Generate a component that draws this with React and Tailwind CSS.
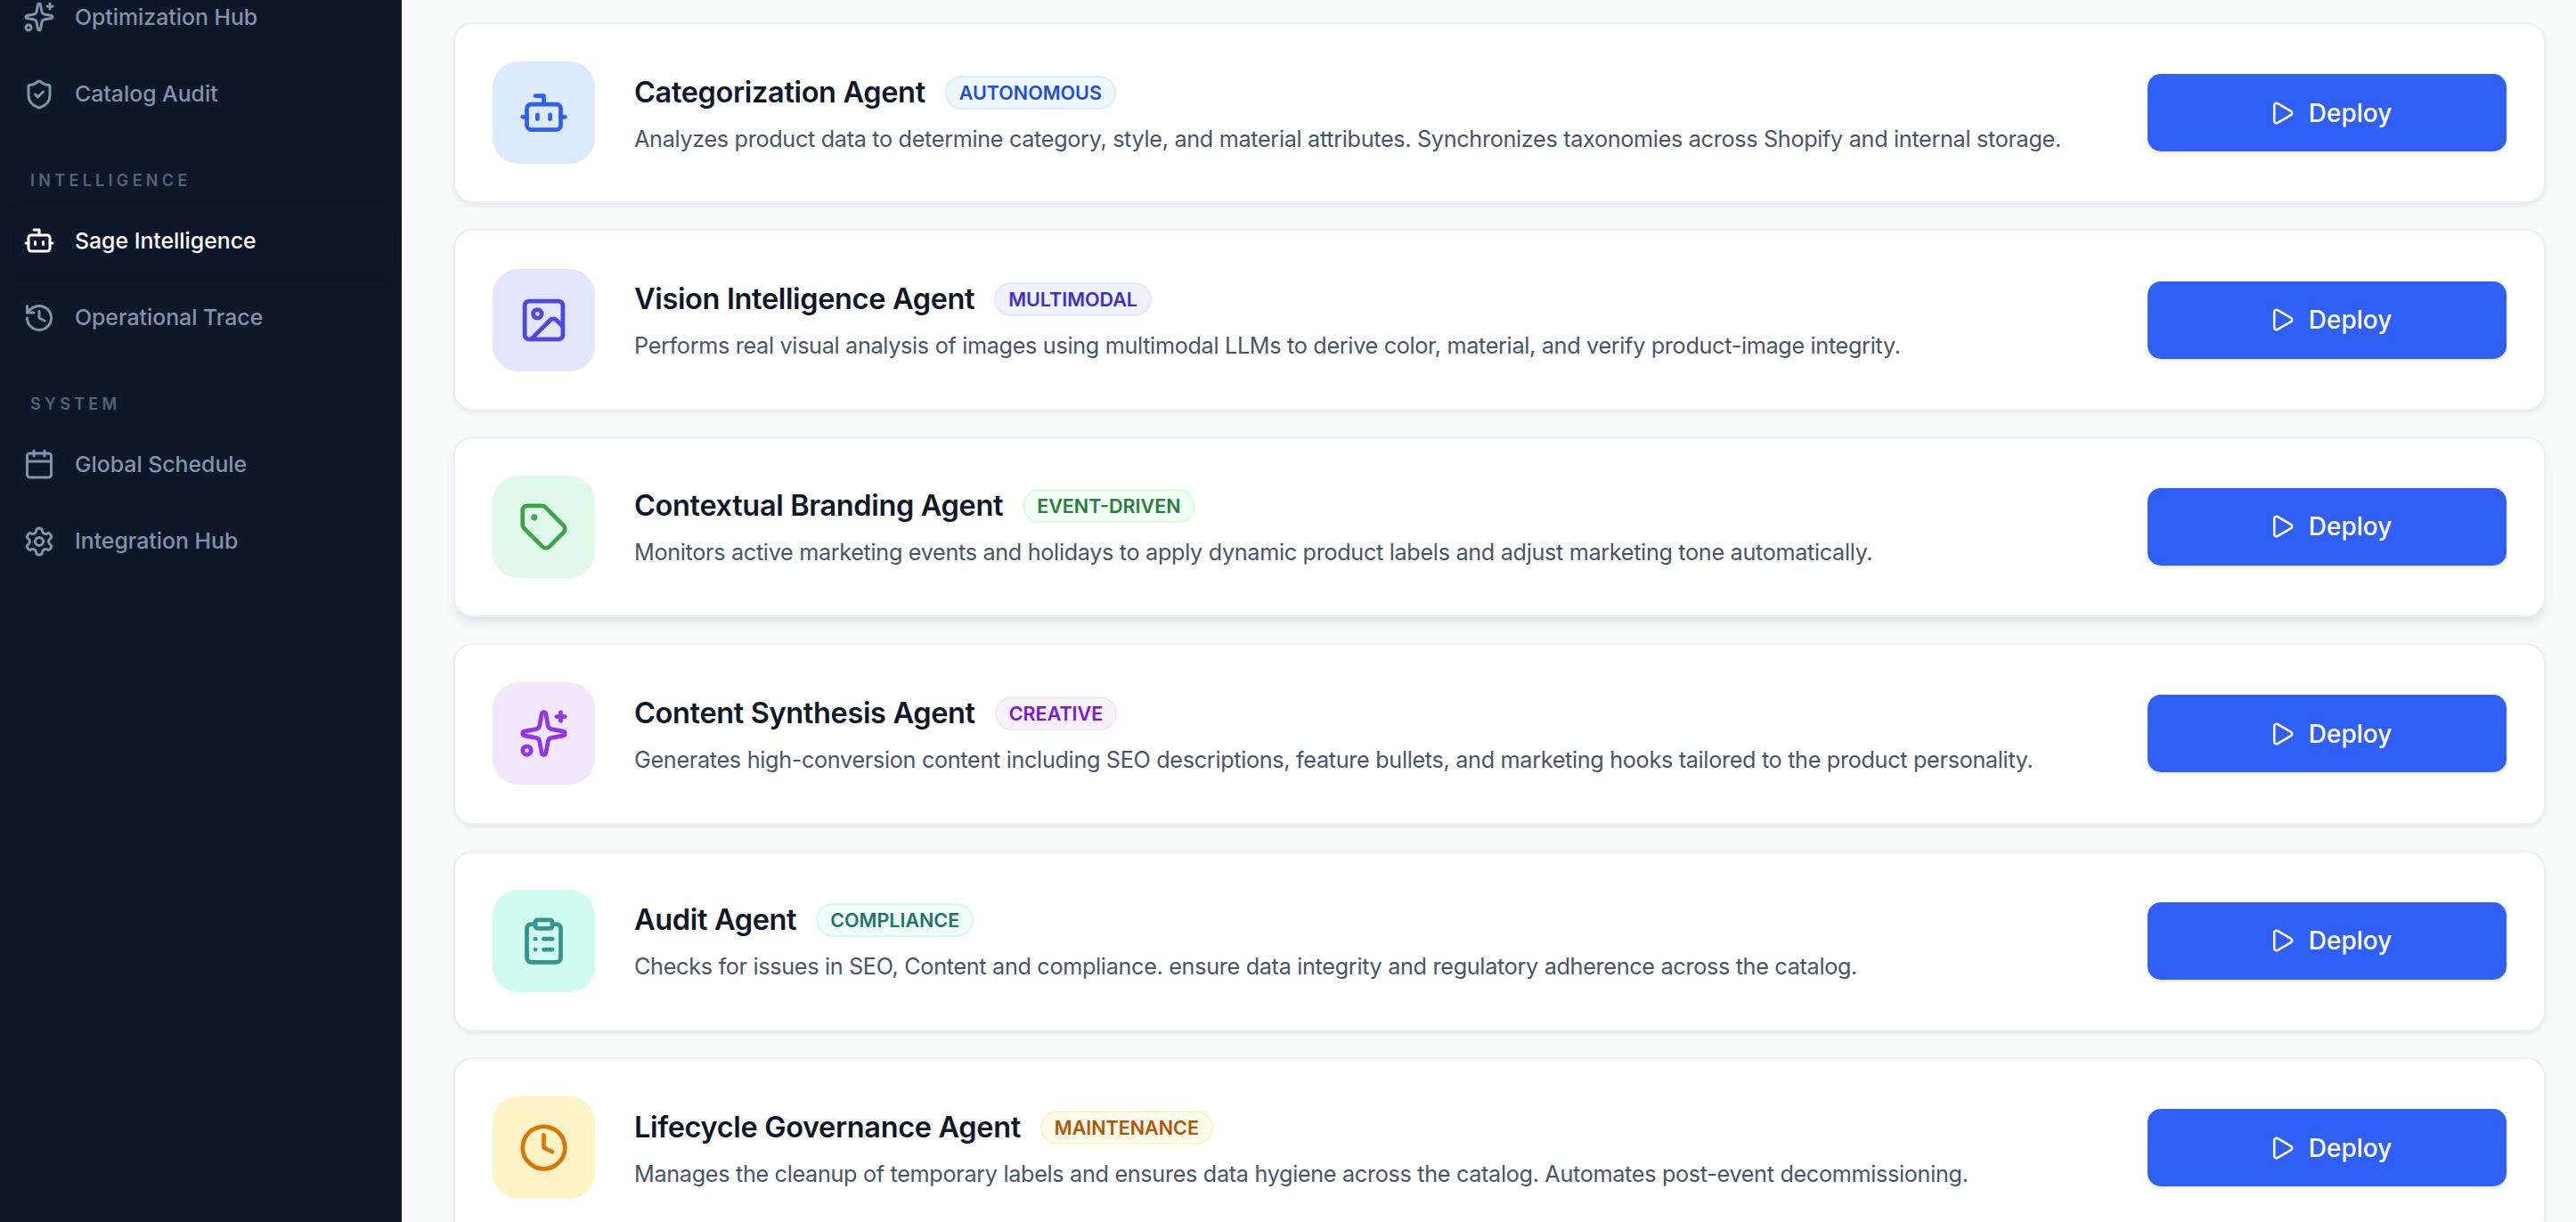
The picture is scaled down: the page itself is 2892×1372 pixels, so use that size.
import { Sparkles, ShieldCheck, Bot, History, Calendar, Settings, Image, Tag, ClipboardList, Clock, Play } from "lucide-react";

const agents = [
  {
    name: "Categorization Agent",
    badge: "AUTONOMOUS",
    desc: "Analyzes product data to determine category, style, and material attributes. Synchronizes taxonomies across Shopify and internal storage.",
    Icon: Bot,
    iconBox: "bg-[#dbeafe] text-[#2f5ff5]",
    badgeBox: "bg-[#eff6ff] border-[#dbeafe] text-[#1d4ed8]",
  },
  {
    name: "Vision Intelligence Agent",
    badge: "MULTIMODAL",
    desc: "Performs real visual analysis of images using multimodal LLMs to derive color, material, and verify product-image integrity.",
    Icon: Image,
    iconBox: "bg-[#e0e7ff] text-[#4f46e5]",
    badgeBox: "bg-[#eef2ff] border-[#e0e7ff] text-[#3f2fc9]",
  },
  {
    name: "Contextual Branding Agent",
    badge: "EVENT-DRIVEN",
    desc: "Monitors active marketing events and holidays to apply dynamic product labels and adjust marketing tone automatically.",
    Icon: Tag,
    iconBox: "bg-[#e1f9e8] text-[#3aa34c]",
    badgeBox: "bg-[#f0fdf4] border-[#dcfce7] text-[#2a7d3f]",
    hovered: true,
  },
  {
    name: "Content Synthesis Agent",
    badge: "CREATIVE",
    desc: "Generates high-conversion content including SEO descriptions, feature bullets, and marketing hooks tailored to the product personality.",
    Icon: Sparkles,
    iconBox: "bg-[#f1e8fe] text-[#9333ea]",
    badgeBox: "bg-[#f7f2fe] border-[#f1e8fe] text-[#7e14d8]",
  },
  {
    name: "Audit Agent",
    badge: "COMPLIANCE",
    desc: "Checks for issues in SEO, Content and compliance. ensure data integrity and regulatory adherence across the catalog.",
    Icon: ClipboardList,
    iconBox: "bg-[#d0fbf1] text-[#36958a]",
    badgeBox: "bg-[#f0fdfa] border-[#d5f9f0] text-[#20756a]",
  },
  {
    name: "Lifecycle Governance Agent",
    badge: "MAINTENANCE",
    desc: "Manages the cleanup of temporary labels and ensures data hygiene across the catalog. Automates post-event decommissioning.",
    Icon: Clock,
    iconBox: "bg-[#fef3c7] text-[#d97706]",
    badgeBox: "bg-[#fffbeb] border-[#fef3c7] text-[#b45309]",
  },
];

const NavItem = ({ Icon, label, active }) => (
  <div
    className={`flex items-center h-[82.5px] pl-[17px] gap-[22px] rounded-[15px] ${
      active ? "text-white shadow-[0_4px_12px_rgba(0,0,0,0.1)]" : "text-[#8493a9]"
    }`}
  >
    <Icon size={36} strokeWidth={2} className="shrink-0" />
    <span className="text-[24.8px] font-medium">{label}</span>
  </div>
);

const NavLabel = ({ children }) => (
  <div className="h-[20px] mt-[41px] mb-[13px] pl-[25px] flex items-center text-[18px] font-semibold tracking-[4.3px] text-[#566379]">
    {children}
  </div>
);

const AgentCard = ({ agent }) => {
  const { Icon } = agent;
  return (
    <div
      className={`flex items-center shrink-0 h-[203.4px] px-[42px] gap-[44px] bg-white rounded-[22px] border-2 border-[#eceef3] ${
        agent.hovered
          ? "shadow-[0_8px_14px_-4px_rgba(15,23,42,0.14)]"
          : "shadow-[0_3px_5px_rgba(15,23,42,0.08)]"
      }`}
    >
      <div className={`flex items-center justify-center w-[115px] h-[115px] rounded-[29px] shrink-0 ${agent.iconBox}`}>
        <Icon size={57} strokeWidth={2} />
      </div>
      <div className="flex-1 min-w-0 pt-[5px]">
        <div className="flex items-center gap-[22px]">
          <h3 className="text-[32.5px] leading-[44px] font-semibold tracking-[-0.35px] text-[#0f172a]">{agent.name}</h3>
          <span
            className={`flex items-center h-[38px] px-[14px] rounded-full border-2 text-[21.5px] font-semibold ${agent.badgeBox}`}
          >
            {agent.badge}
          </span>
        </div>
        <p className="mt-[9px] text-[25.2px] leading-[42px] tracking-[-0.31px] text-[#475569]">{agent.desc}</p>
      </div>
      <button className="flex items-center justify-center gap-[15px] w-[403px] h-[87px] pl-[7px] rounded-[15px] bg-[#2f5ff5] text-white text-[28px] font-medium shrink-0 shadow-[0_2px_4px_rgba(15,23,42,0.1)]">
        <Play size={30} strokeWidth={2} />
        Deploy
      </button>
    </div>
  );
};

const App = () => {
  return (
    <div className="flex h-screen w-full overflow-hidden bg-[#f8fafa] font-['Inter',sans-serif]">
      {/* Sidebar */}
      <aside className="w-[451px] shrink-0 bg-[#0f172a] overflow-hidden">
        <nav className="-mt-[22px] px-[9px] flex flex-col gap-[4px]">
          <NavItem Icon={Sparkles} label="Optimization Hub" />
          <NavItem Icon={ShieldCheck} label="Catalog Audit" />
          <NavLabel>INTELLIGENCE</NavLabel>
          <NavItem Icon={Bot} label="Sage Intelligence" active />
          <NavItem Icon={History} label="Operational Trace" />
          <NavLabel>SYSTEM</NavLabel>
          <NavItem Icon={Calendar} label="Global Schedule" />
          <NavItem Icon={Settings} label="Integration Hub" />
        </nav>
      </aside>

      {/* Agents */}
      <main className="flex-1 min-w-0 pt-[25px] pl-[58px] pr-[34px] flex flex-col gap-[29px]">
        {agents.map((agent) => (
          <AgentCard key={agent.name} agent={agent} />
        ))}
      </main>
    </div>
  );
};

export default App;
